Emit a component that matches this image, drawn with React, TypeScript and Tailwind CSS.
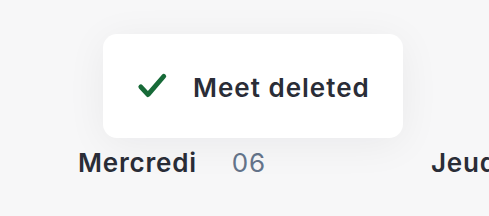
import React from 'react';

const days = [
  { name: 'Mercredi', num: '06' },
  { name: 'Jeudi', num: '07' },
];

export default function App() {
  return (
    <div
      className="relative w-[489px] h-[216px] overflow-hidden bg-[#f7f7f8]"
      style={{ fontFamily: 'Inter, "Noto Sans", sans-serif' }}
    >
      {/* Week header */}
      <div className="flex pt-[147px] pl-[78px] whitespace-nowrap">
        {days.map((d) => (
          <div key={d.name} className="flex items-baseline gap-[35px] w-[353px] shrink-0">
            <span className="text-[26px] font-semibold leading-[32px] tracking-[0.8px] text-[#2a2d37]">
              {d.name}
            </span>
            <span className="text-[26px] leading-[32px] tracking-[0.8px] text-[#64748b]">{d.num}</span>
          </div>
        ))}
      </div>

      {/* Toast */}
      <div className="absolute left-[103px] top-[34px] w-[300px] h-[104px] rounded-[14px] bg-white shadow-[0_6px_40px_rgba(15,23,42,0.06)] flex items-center pl-[33px]">
        <svg width="32" height="28" viewBox="0 0 32 28" fill="none" className="shrink-0">
          <path
            d="M4.8 14.8 L12 22.6 L27.8 4.2"
            stroke="#176a38"
            strokeWidth="4.8"
            strokeLinecap="round"
            strokeLinejoin="round"
          />
        </svg>
        <span className="ml-[25px] mt-[3px] text-[26px] leading-[32px] font-semibold tracking-[1px] text-[#2a2d37]">
          Meet deleted
        </span>
      </div>
    </div>
  );
}
